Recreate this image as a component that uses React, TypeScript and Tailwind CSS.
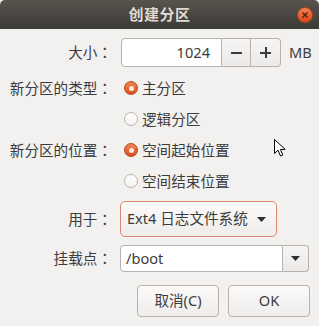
import React from 'react';

const font = { fontFamily: '"Noto Sans", "Noto Sans CJK SC", sans-serif' };

function Radio({ checked, label }: { checked?: boolean; label: string }) {
  return (
    <div className="flex items-center gap-[4px] ml-[4px]">
      {checked ? (
        <span className="w-[14px] h-[14px] rounded-full border border-[#b9451c] bg-gradient-to-b from-[#f08656] to-[#d84e1b] flex items-center justify-center">
          <span className="w-[5px] h-[5px] rounded-full bg-[#fbe9e0]"></span>
        </span>
      ) : (
        <span className="w-[14px] h-[14px] rounded-full border border-[#b8b4af] bg-gradient-to-b from-white to-[#f4f3f2]"></span>
      )}
      <span>{label}</span>
    </div>
  );
}

function Row({ label, children, className = '' }: { label?: string; children: React.ReactNode; className?: string }) {
  return (
    <div className={`flex items-center ${className}`}>
      <div className="w-[112px] shrink-0 text-right">
        {label && (
          <>
            {label}
            <span className="font-['Noto_Sans_CJK_JP',sans-serif]">：</span>
          </>
        )}
      </div>
      <div className="ml-[8px] flex items-center">{children}</div>
    </div>
  );
}

function Arrow() {
  return (
    <svg width="9" height="5" viewBox="0 0 9 5">
      <path d="M0 0 L9 0 L4.5 5 Z" fill="#2e2e2e" />
    </svg>
  );
}

export default function App() {
  return (
    <div className="relative w-[319px] h-[326px] bg-[#f2f1f0] text-[#3c3c3c] text-[14.6px] overflow-hidden" style={font}>
      {/* Title bar */}
      <div className="relative h-[29px] rounded-t-[5px] bg-gradient-to-b from-[#57544e] to-[#3d3b37] flex items-center justify-center">
        <span className="font-bold text-[#dfdbd2] text-[15px] tracking-[0.5px]">创建分区</span>
        <span className="absolute right-[6px] top-[7px] w-[16px] h-[16px] rounded-full bg-gradient-to-b from-[#f3804e] to-[#d9461a] border border-[#b8411a] flex items-center justify-center">
          <svg width="6" height="6" viewBox="0 0 6 6">
            <path d="M0.5 0.5 L5.5 5.5 M5.5 0.5 L0.5 5.5" stroke="#4a2210" strokeWidth="1.3" />
          </svg>
        </span>
      </div>

      <div className="flex flex-col pt-[9px]">
        <Row label="大小" className="h-[29px]">
          <div className="flex h-[29px] ml-[1px]">
            <div className="w-[101px] h-full bg-white border border-[#b6b2ad] rounded-l-[4px] flex items-center justify-end pr-[11px]">1024</div>
            <div className="w-[29px] h-full bg-gradient-to-b from-[#f6f5f4] to-[#ebeae8] border-y border-r border-[#b6b2ad] flex items-center justify-center">
              <span className="w-[11px] h-[2px] bg-[#3c3c3c]"></span>
            </div>
            <div className="w-[30px] h-full bg-gradient-to-b from-[#f6f5f4] to-[#ebeae8] border-y border-r border-[#b6b2ad] rounded-r-[4px] flex items-center justify-center relative">
              <span className="absolute w-[11px] h-[2px] bg-[#3c3c3c]"></span>
              <span className="absolute w-[2px] h-[11px] bg-[#3c3c3c]"></span>
            </div>
            <span className="ml-[8px] self-center">MB</span>
          </div>
        </Row>

        <Row label="新分区的类型" className="h-[31px] mt-[6px]">
          <Radio checked label="主分区" />
        </Row>
        <Row className="h-[31px]">
          <Radio label="逻辑分区" />
        </Row>
        <Row label="新分区的位置" className="h-[31px]">
          <Radio checked label="空间起始位置" />
        </Row>
        <Row className="h-[31px]">
          <Radio label="空间结束位置" />
        </Row>

        <Row label="用于" className="h-[36px] mt-[4px]">
          <div className="w-[157px] h-[36px] rounded-[5px] border border-[#d98a6e] bg-gradient-to-b from-[#fbfaf9] to-[#eeedeb] flex items-center pl-[6px] pr-[10px] justify-between">
            <span>Ext4 日志文件系统</span>
            <Arrow />
          </div>
        </Row>

        <Row label="挂载点" className="h-[27px] mt-[8px]">
          <div className="flex w-[189px] h-[27px]">
            <div className="flex-1 h-full bg-white border border-[#b6b2ad] rounded-l-[4px] flex items-center pl-[5px]">/boot</div>
            <div className="w-[26px] h-full bg-gradient-to-b from-[#f6f5f4] to-[#ebeae8] border-y border-r border-[#b6b2ad] rounded-r-[4px] flex items-center justify-center">
              <Arrow />
            </div>
          </div>
        </Row>

        <div className="flex justify-end gap-[9px] pr-[9px] mt-[13px]">
          <button className="w-[82px] h-[32px] rounded-[4px] border border-[#b6b2ad] bg-gradient-to-b from-[#fbfaf9] to-[#eeedeb] text-[#3c3c3c]">取消(C)</button>
          <button className="w-[82px] h-[32px] rounded-[4px] border border-[#b6b2ad] bg-gradient-to-b from-[#fbfaf9] to-[#eeedeb] text-[#3c3c3c]">OK</button>
        </div>
      </div>

      {/* Mouse pointer */}
      <svg className="absolute left-[274px] top-[139px]" width="14" height="19" viewBox="0 0 14 19">
        <path d="M0.5 0.5 L0.5 14.5 L4 11.2 L6.5 17 L8.8 16 L6.4 10.4 L11.2 10.4 Z" fill="white" stroke="black" strokeWidth="1" strokeLinejoin="round" />
      </svg>
    </div>
  );
}
